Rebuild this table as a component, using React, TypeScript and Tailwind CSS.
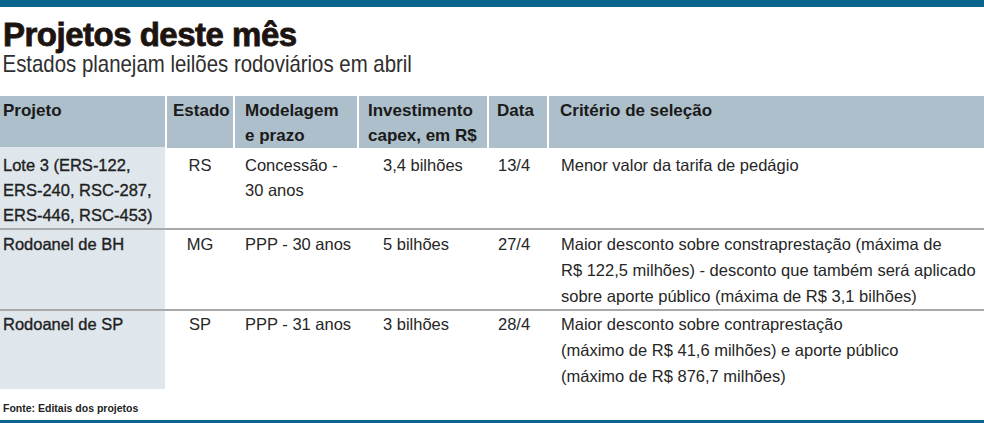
import React from "react";

const cols = "grid grid-cols-[165px_66px_122px_128px_58px_1fr] gap-x-[2px]";

type Row = {
  projeto: string[];
  estado: string;
  modelo: string[];
  invest: string;
  data: string;
  criterio: string[];
  pt: string;
  pb: string;
  lh: string;
  border: boolean;
};

const rows: Row[] = [
  {
    projeto: ["Lote 3 (ERS-122,", "ERS-240, RSC-287,", "ERS-446, RSC-453)"],
    estado: "RS",
    modelo: ["Concessão -", "30 anos"],
    invest: "3,4 bilhões",
    data: "13/4",
    criterio: ["Menor valor da tarifa de pedágio"],
    pt: "pt-[6px]",
    pb: "pb-[0px]",
    lh: "leading-[25px]",
    border: true,
  },
  {
    projeto: ["Rodoanel de BH"],
    estado: "MG",
    modelo: ["PPP - 30 anos"],
    invest: "5 bilhões",
    data: "27/4",
    criterio: [
      "Maior desconto sobre constraprestação (máxima de",
      "R$ 122,5 milhões) - desconto que também será aplicado",
      "sobre aporte público (máxima de R$ 3,1 bilhões)",
    ],
    pt: "pt-[1px]",
    pb: "pb-[0px]",
    lh: "leading-[26px]",
    border: true,
  },
  {
    projeto: ["Rodoanel de SP"],
    estado: "SP",
    modelo: ["PPP - 31 anos"],
    invest: "3 bilhões",
    data: "28/4",
    criterio: [
      "Maior desconto sobre contraprestação",
      "(máximo de R$ 41,6 milhões) e aporte público",
      "(máximo de R$ 876,7 milhões)",
    ],
    pt: "pt-[0px]",
    pb: "pb-[3px]",
    lh: "leading-[26px]",
    border: false,
  },
];

function Lines({ lines }: { lines: string[] }) {
  return (
    <>
      {lines.map((l, i) => (
        <div key={i} className="whitespace-nowrap">
          {l}
        </div>
      ))}
    </>
  );
}

export default function App() {
  return (
    <div className="w-[984px] h-[423px] bg-white flex flex-col font-['Liberation_Sans',Arial,sans-serif] text-[#262626] overflow-hidden">
      <div className="h-[7px] bg-[#0b658e] shrink-0" />
      <h1 className="mt-[11px] pl-[3px] text-[33px] leading-[34px] font-bold tracking-[-0.5px] text-[#1c1410] [-webkit-text-stroke:0.8px_#1c1410]">
        Projetos deste mês
      </h1>
      <p className="mt-0 pl-[3px] text-[24px] leading-[24px] text-[#2e2e2e] whitespace-nowrap origin-left scale-x-[0.85]">
        Estados planejam leilões rodoviários em abril
      </p>

      <div className="mt-[20px]">
        <div
          className={`${cols} h-[51px] text-[17px] leading-[25px] font-bold text-[#1a1a1a] border-b border-white`}
        >
          <div className="bg-[#adbfca] pl-[3px] pt-[2px]">Projeto</div>
          <div className="bg-[#adbfca] pl-[6px] pt-[2px]">Estado</div>
          <div className="bg-[#adbfca] pl-[10px] pt-[2px]">
            Modelagem
            <br />e prazo
          </div>
          <div className="bg-[#adbfca] pl-[9px] pt-[2px] whitespace-nowrap">
            Investimento
            <br />
            capex, em R$
          </div>
          <div className="bg-[#adbfca] pl-[8px] pt-[2px]">Data</div>
          <div className="bg-[#adbfca] pl-[11px] pt-[2px]">Critério de seleção</div>
        </div>

        {rows.map((r, i) => (
          <div
            key={i}
            className={`${cols} text-[16.5px] ${r.lh} ${r.border ? "border-b-2 border-[#a9a9a9]" : ""}`}
          >
            <div
              className={`bg-[#dfe7ed] pl-[3px] ${r.pt} ${r.pb} text-[#1f1f1f] [-webkit-text-stroke:0.35px_#1f1f1f]`}
            >
              <Lines lines={r.projeto} />
            </div>
            <div className={`text-center ${r.pt}`}>{r.estado}</div>
            <div className={`pl-[10px] ${r.pt}`}>
              <Lines lines={r.modelo} />
            </div>
            <div className={`pl-[24px] ${r.pt} whitespace-nowrap`}>{r.invest}</div>
            <div className={`pl-[9px] ${r.pt}`}>{r.data}</div>
            <div className={`pl-[12px] ${r.pt}`}>
              <Lines lines={r.criterio} />
            </div>
          </div>
        ))}
      </div>

      <div className="mt-[12px] pl-[3px] text-[10.5px] leading-[14px] font-bold text-[#222]">
        Fonte: Editais dos projetos
      </div>
      <div className="flex-1" />
      <div className="h-[3px] bg-[#0b658e] shrink-0" />
    </div>
  );
}
